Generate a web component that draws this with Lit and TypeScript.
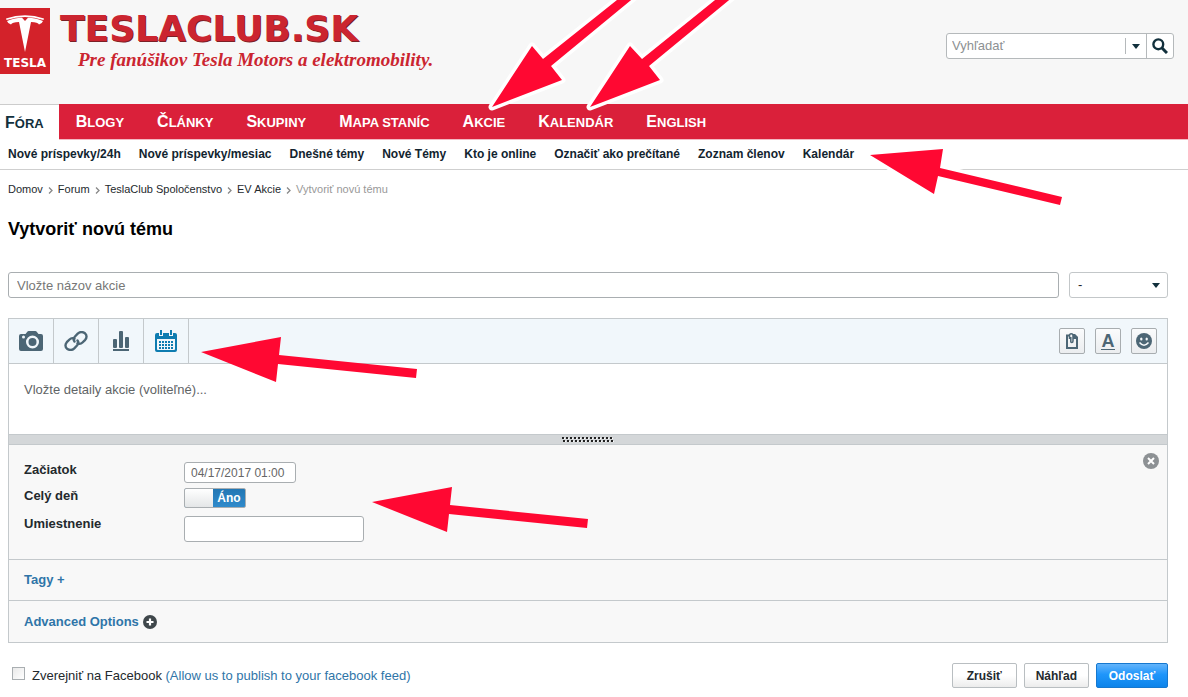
import { LitElement, html, css, svg } from "lit";
import { customElement, state } from "lit/decorators.js";
import { classMap } from "lit/directives/class-map.js";

const SECTIONS = ["Fóra", "Blogy", "Články", "Skupiny", "Mapa staníc", "Akcie", "Kalendár", "English"];
const SUBSECTIONS = [
  "Nové príspevky/24h", "Nové príspevky/mesiac", "Dnešné témy", "Nové Témy",
  "Kto je online", "Označiť ako prečítané", "Zoznam členov", "Kalendár",
];
const TRAIL = ["Domov", "Forum", "TeslaClub Spoločenstvo", "EV Akcie"];

const camera = svg`<svg width="24" height="20" viewBox="0 0 24 20"><path fill="#4c6675" fill-rule="evenodd" d="M2 3h4.500l2-2.500q.5-.5 1-.5h7q.5 0 1 .5l2 2.500H22q2 0 2 2v13q0 2-2 2H2q-2 0-2-2V5q0-2 2-2zM4.500 4.500a1.500 1.500 0 1 0 0 3 1.500 1.500 0 1 0 0-3zM13.500 4.500a6.500 6.500 0 1 0 0 13 6.500 6.500 0 1 0 0-13zM13.500 7a4 4 0 1 1 0 8 4 4 0 1 1 0-8z"/></svg>`;
const link = svg`<svg width="24" height="20" viewBox="0 0 24 20" fill="none" stroke="#4c6675" stroke-width="2.400" stroke-linecap="round"><path d="M10.500 10.500C9 8.500 9.500 7 11 5.500l2.700-2.800C16 .6 19 .9 21 2.300c2 1.700 2 4.500.2 6.500l-2.700 2.700c-1.500 1.500-3.200 1.800-5 .8"/><path d="M13.500 9.500c1.500 2 1 3.500-.5 5l-2.700 2.800C8 19.400 5 19.100 3 17.700c-2-1.700-2-4.500-.2-6.500l2.700-2.700c1.500-1.500 3.200-1.800 5-.8"/></svg>`;
const chart = svg`<svg width="18" height="20" viewBox="0 0 18 20" fill="#4c6675"><rect x="1" y="8" width="4" height="9" rx="1"/><rect x="7" y="0" width="4" height="17" rx="1"/><rect x="13" y="6" width="4" height="11" rx="1"/><rect x="1" y="18" width="16" height="2"/></svg>`;
const dots: unknown[] = [];
for (let r = 0; r < 3; r++) for (let c = 0; c < 5; c++) dots.push(svg`<rect x=${4 + c * 3} y=${11 + r * 3} width="2" height="2"/>`);
const calendar = svg`<svg width="22" height="22" viewBox="0 0 22 22"><path fill="#0e7cb0" fill-rule="evenodd" d="M2 3h2v3h4V3h6v3h4V3h2q2 0 2 2v15q0 2-2 2H2q-2 0-2-2V5q0-2 2-2zM2 9v10q0 1 1 1h16q1 0 1-1V9z"/><path fill="#0e7cb0" d="M5 0h2v5H5zM15 0h2v5h-2z"/><g fill="#0e7cb0">${dots}</g></svg>`;
const paste = svg`<svg width="14" height="16" viewBox="0 0 14 16" fill="none" stroke="#4c6675"><path stroke-width="2" d="M5 2.500H2V15h10V5L9.500 2.500H9"/><path stroke-width="1.500" d="M4.500 6V2.500Q4.500.8 6.200.8T8 2.500V8q0 1.500-1.200 1.500T5.800 8V4"/><path fill="#4c6675" stroke="none" d="M8 1h2l3 3v2H8z"/></svg>`;
const smile = svg`<svg width="16" height="16" viewBox="0 0 16 16"><circle cx="8" cy="8" r="8" fill="#4c6675"/><g fill="#f4f7f9"><ellipse cx="5.300" cy="6" rx="1.200" ry="1.500"/><ellipse cx="10.700" cy="6" rx="1.200" ry="1.500"/></g><path d="M3.500 9.500q4.500 5.500 9 0" fill="none" stroke="#f4f7f9" stroke-width="1.500"/></svg>`;
const search = svg`<svg width="16" height="16" viewBox="0 0 16 16" fill="none" stroke="#12303c"><circle cx="6.300" cy="6.300" r="4.900" stroke-width="2.400"/><path d="M10 10l5 5" stroke-width="3"/></svg>`;
const caret = svg`<svg width="8" height="5" viewBox="0 0 8 5"><path d="M0 0h8L4 5z" fill="#12303c"/></svg>`;
const emblem = svg`<svg width="38" height="37" viewBox="0 0 38 37" fill="#fff"><path d="M0 3.500Q19-3 38 3.500L37.500 5Q19-.8.5 5z"/><path d="M1 6Q10 2.500 16 2.700L19 6l3-3.300Q28 2.500 37 6q-1 3-4 3.500-1-2.500-8-2.500L19 37 13 7Q6 7 5 9.500 2 9 1 6z"/></svg>`;
const plus = svg`<svg width="14" height="14" viewBox="0 0 14 14"><circle cx="7" cy="7" r="7" fill="#3f474b"/><path d="M7 3.500v7M3.500 7h7" stroke="#fff" stroke-width="2.200"/></svg>`;
const close = svg`<svg width="16" height="16" viewBox="0 0 16 16"><circle cx="8" cy="8" r="8" fill="#8d9194"/><path d="M5 5l6 6M11 5l-6 6" stroke="#fff" stroke-width="2"/></svg>`;
const gripDots: unknown[] = [];
for (let i = 0; i < 13; i++) gripDots.push(svg`<path d="M${i * 4} 0h2v2h-2zM${i * 4 + 1} 3h2v2h-2z" fill="#222"/><path d="M${i * 4 + 2} 1h1v1h-1zM${i * 4 + 3} 4h1v1h-1z" fill="#fff"/>`);
const grip = svg`<svg width="52" height="5" viewBox="0 0 52 5">${gripDots}</svg>`;

@customElement("app-root")
export class AppRoot extends LitElement {
  @state() private allDay = true;

  static styles = css`
    :host { display: block; position: relative; min-height: 100vh; overflow: hidden; background: #fff; color: #23292d;
      font: 13px/16px "Liberation Sans", Arial, sans-serif; }
    * { box-sizing: border-box; }
    a { color: inherit; text-decoration: none; }
    svg { display: block; flex: none; }
    input, select, button, textarea { font: inherit; color: inherit; margin: 0; }
    input::placeholder, textarea::placeholder { color: #777; opacity: 1; }
    button { cursor: pointer; }

    .header { display: flex; align-items: flex-start; justify-content: space-between; height: 104px; padding: 8px 14px 0 0; background: #f7f7f7; }
    .brand { display: flex; gap: 10px; color: #cb2530; }
    .badge { display: flex; flex-direction: column; align-items: center; width: 50px; height: 66px; padding-top: 7px; background: #d3222a; color: #fff; }
    .badge-name { margin-top: 4px; font: bold 12px/14px "DejaVu Sans", sans-serif; }
    .name { font: bold 36px/42px "DejaVu Sans", sans-serif; text-shadow: 1px 1px 0 #7c2026; }
    .motto { padding-left: 18px; font: italic bold 19px/20px "Liberation Serif", serif; }
    .search { display: flex; align-items: center; width: 228px; height: 26px; margin-top: 25px; border: 1px solid #b5b9bb; border-radius: 3px; background: #fff; }
    .search input { flex: 1; min-width: 0; border: 0; padding: 0 5px; outline: 0; background: none; }
    .search input::placeholder { color: #8d9193; }
    .scope { display: flex; align-items: center; justify-content: center; width: 21px; height: 16px; padding: 0; border: 0; border-left: 1px solid #b5b9bb; background: none; }
    .go { display: flex; align-items: center; justify-content: center; width: 27px; height: 24px; padding: 0; border: 0; border-left: 1px solid #b5b9bb; background: none; }

    .nav { display: flex; height: 36px; background: #da203a; border-bottom: 1px solid #f3bac2; color: #fff; }
    .nav a { padding: 0 16px 0 17px; font-size: 13px; line-height: 35px; font-weight: bold; text-transform: uppercase; white-space: nowrap; }
    .nav a::first-letter { font-size: 16px; }
    .nav a.current { height: 36px; padding: 0 15px 0 5px; background: #fff; border-top: 1px solid #ccc; color: #12303c; }
    .subnav { display: flex; gap: 18px; padding: 0 8px; height: 30px; border-bottom: 1px solid #cfcfcf; color: #12242f; font-size: 12px; line-height: 28px; font-weight: bold; white-space: nowrap; }

    .main { padding: 11px 20px 8px 8px; }
    .trail { display: flex; align-items: center; gap: 5px; font-size: 11px; line-height: 16px; }
    .trail svg { margin-top: 2px; }
    .here { color: #999; }
    h1 { margin: 20px 0 31px; font-size: 18px; line-height: 24px; color: #000; }
    .title-row { display: flex; gap: 10px; }
    .title { flex: 1; min-width: 0; height: 26px; padding: 0 8px; border: 1px solid #a9aeb1; border-radius: 3px; background: #fff; }
    .prefix { display: flex; align-items: center; position: relative; width: 99px; }
    .prefix select { width: 100%; height: 26px; padding: 0 8px; border: 1px solid #c3c7c9; border-radius: 3px; background: #fff; appearance: none; }
    .prefix svg { position: absolute; right: 8px; pointer-events: none; }

    .editor { margin-top: 20px; border: 1px solid #c4c9cc; }
    .toolbar { display: flex; align-items: center; height: 45px; border-bottom: 1px solid #c4c9cc; background: #f1f7fb; padding-right: 10px; }
    .tool { display: flex; align-items: center; justify-content: center; width: 45px; height: 44px; padding: 0; border: 0; border-right: 1px solid #c4c9cc; background: none; }
    .spacer { flex: 1; }
    .mini { display: flex; align-items: center; justify-content: center; width: 26px; height: 26px; margin-left: 10px; padding: 0; border: 1px solid #a8adb0; border-radius: 2px; background: linear-gradient(#fafbfc, #ebedef); color: #4c6675; }
    .letter { width: 14px; height: 17px; border-bottom: 1px solid #4c6675; font-size: 18px; line-height: 16px; font-weight: bold; }
    .body { display: block; width: 100%; height: 70px; padding: 18px 15px; border: 0; resize: none; outline: 0; background: #fff; line-height: 16px; overflow: hidden; }
    .body::placeholder { color: #5f6466; }
    .resize { display: flex; align-items: center; justify-content: center; height: 11px; background: #d4d7d9; border: solid #c4c9cc; border-width: 1px 0; }
    .event { display: flex; justify-content: space-between; height: 115px; padding: 8px 8px 16px 15px; background: #f8f8f8; border-bottom: 1px solid #c4c9cc; }
    .fields { display: grid; grid-template-columns: 160px auto; grid-template-rows: 26px 28px 28px; padding-top: 9px; align-items: start; }
    .fields > label:not(.switch) { font-weight: bold; }
    .date { width: 112px; height: 21px; padding: 0 6px; border: 1px solid #a9aeb1; border-radius: 3px; background: #fff; color: #666; font-size: 12px; }
    .switch { display: flex; width: 62px; height: 20px; border: 1px solid #a9aeb1; border-radius: 2px; overflow: hidden; background: #bbb; color: #fff; font-size: 12px; line-height: 18px; font-weight: bold; }
    .switch.on { background: linear-gradient(#2277b4, #2f8acb); }
    .switch input { appearance: none; width: 28px; height: 18px; background: linear-gradient(#fff, #e4e6e7); }
    .switch span { flex: 1; text-align: center; }
    .place { width: 180px; height: 26px; padding: 0 6px; border: 1px solid #a9aeb1; border-radius: 3px; background: #fff; }
    .dismiss { display: block; width: 16px; height: 16px; padding: 0; border: 0; background: none; }
    .fold { display: flex; align-items: center; height: 40px; padding: 0 15px; background: #f8f8f8; color: #2f75a8; font-weight: bold; }
    .fold + .fold { border-top: 1px solid #c4c9cc; height: 42px; }
    .fold button { display: flex; align-items: center; gap: 4px; padding: 0; border: 0; background: none; }

    .footer { display: flex; align-items: center; gap: 7px; margin-top: 20px; padding-left: 4px; }
    .share { display: flex; align-items: center; gap: 7px; }
    .share input { appearance: none; width: 13px; height: 13px; margin-bottom: 4px; border: 1px solid #a9aeb1; background: linear-gradient(135deg, #e9e9e9, #fff); }
    .share input:checked { background: #2f8acb; }
    .share em { font-style: normal; color: #2f75a8; }
    .action { height: 25px; min-width: 65px; padding: 0 11px; border: 1px solid #b9bec1; border-radius: 2px; background: linear-gradient(#fff 50%, #ececec); font-size: 12px; font-weight: bold; }
    .action.submit { min-width: 72px; border-color: #1678cf; background: linear-gradient(#63b4fb, #1f96fb 45%, #0d84ea); color: #fff; }

    .marks { position: absolute; top: 0; left: 0; width: 100%; height: 100%; pointer-events: none; }
    .marks path { fill: #ff0832; }
    .outlined { stroke: #fff; stroke-width: 7; stroke-linejoin: round; paint-order: stroke; }
  `;

  render() {
    return html`
      <header class="header">
        <a class="brand" href="#">
          <div class="badge">${emblem}<span class="badge-name">TESLA</span></div>
          <div>
            <div class="name">TESLACLUB.SK</div>
            <div class="motto">Pre fanúšikov Tesla Motors a elektromobility.</div>
          </div>
        </a>
        <form class="search">
          <input type="search" placeholder="Vyhľadať" aria-label="Vyhľadať">
          <button class="scope" type="button">${caret}</button>
          <button class="go" type="button">${search}</button>
        </form>
      </header>
      <nav class="nav">
        ${SECTIONS.map((s, i) => html`<a href="#" class=${classMap({ current: i === 0 })}>${s}</a>`)}
      </nav>
      <nav class="subnav">${SUBSECTIONS.map((s) => html`<a href="#">${s}</a>`)}</nav>
      <main class="main">
        <nav class="trail">
          ${TRAIL.map((t) => html`<a href="#">${t}</a><svg width="5" height="7" viewBox="0 0 5 7"><path d="M1 .5l3 3-3 3" fill="none" stroke="#888" stroke-width="1.300"/></svg>`)}
          <span class="here">Vytvoriť novú tému</span>
        </nav>
        <h1>Vytvoriť novú tému</h1>
        <form>
          <div class="title-row">
            <input class="title" type="text" placeholder="Vložte názov akcie" aria-label="Vložte názov akcie">
            <div class="prefix"><select aria-label="-"><option>-</option></select>${caret}</div>
          </div>
          <section class="editor">
            <div class="toolbar">
              ${[camera, link, chart, calendar].map((icon) => html`<button class="tool" type="button">${icon}</button>`)}
              <span class="spacer"></span>
              <button class="mini" type="button">${paste}</button>
              <button class="mini" type="button"><span class="letter">A</span></button>
              <button class="mini" type="button">${smile}</button>
            </div>
            <textarea class="body" placeholder="Vložte detaily akcie (voliteľné)..." aria-label="Vložte detaily akcie (voliteľné)..."></textarea>
            <div class="resize">${grip}</div>
            <div class="event">
              <div class="fields">
                <label for="start">Začiatok</label>
                <input class="date" id="start" type="text" value="04/17/2017 01:00">
                <label for="allday">Celý deň</label>
                <label class=${classMap({ switch: true, on: this.allDay })}>
                  <input id="allday" type="checkbox" .checked=${this.allDay} @change=${() => (this.allDay = !this.allDay)}>
                  <span>Áno</span>
                </label>
                <label for="place">Umiestnenie</label>
                <input class="place" id="place" type="text">
              </div>
              <button class="dismiss" type="button">${close}</button>
            </div>
            <div class="fold"><button type="button">Tagy +</button></div>
            <div class="fold"><button type="button">Advanced Options ${plus}</button></div>
          </section>
          <div class="footer">
            <label class="share"><input type="checkbox"><span>Zverejniť na Facebook <em>(Allow us to publish to your facebook feed)</em></span></label>
            <span class="spacer"></span>
            <button class="action" type="button">Zrušiť</button>
            <button class="action" type="button">Náhľad</button>
            <button class="action submit" type="button">Odoslať</button>
          </div>
        </form>
      </main>
      <svg class="marks" aria-hidden="true">
        <path class="outlined" d="M492 107L532 46 543 59 622-4H636L551 66 562 80z"/>
        <path class="outlined" d="M590 107L630 46 642 59 720-4H734L649 66 660 80z"/>
        <path class="outlined" d="M870 155L943 149 940 168 1062 197 1060 205 938 176 934 194z"/>
        <path d="M201 352L281 337 279 355 417 369 416 378 278 364 276 382z"/>
        <path d="M372 502L452 487 450 505 588 519 587 528 449 514 447 532z"/>
      </svg>
    `;
  }
}
